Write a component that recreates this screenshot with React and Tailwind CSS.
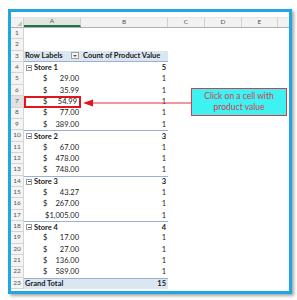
import React from "react";

const rows = [
  { n: 1 },
  { n: 2 },
  { n: 3, type: "head" },
  { n: 4, type: "store", label: "Store 1", count: 5 },
  { n: 5, v: "29.00" },
  { n: 6, v: "35.99" },
  { n: 7, v: "54.99", sel: true },
  { n: 8, v: "77.00" },
  { n: 9, v: "389.00" },
  { n: 10, type: "store", label: "Store 2", count: 3 },
  { n: 11, v: "67.00" },
  { n: 12, v: "478.00" },
  { n: 13, v: "748.00" },
  { n: 14, type: "store", label: "Store 3", count: 3 },
  { n: 15, v: "43.27" },
  { n: 16, v: "267.00" },
  { n: 17, v: "1,005.00", wide: true },
  { n: 18, type: "store", label: "Store 4", count: 4 },
  { n: 19, v: "17.00" },
  { n: 20, v: "27.00" },
  { n: 21, v: "136.00" },
  { n: 22, v: "589.00" },
  { n: 23, type: "total", count: 15 },
];

function Collapse() {
  return (
    <span className="mr-[2px] flex h-[6px] w-[6px] items-center justify-center border border-[#9a9a9a] bg-white">
      <span className="h-px w-[3px] bg-[#555]" />
    </span>
  );
}

function Row({ r }) {
  const blue = r.type === "head" || r.type === "total";
  const lineTop = r.type === "store" && r.n !== 4;
  return (
    <div className="flex h-[11.36px]">
      <div
        className={`flex w-[13px] shrink-0 items-center justify-center border-r border-b border-[#d4d4d4] text-[6.5px] text-[#555] ${
          r.sel ? "bg-[#e1e1e1]" : "bg-[#f4f4f4]"
        }`}
      >
        {r.n}
      </div>
      <div
        className={`flex w-[144px] shrink-0 ${blue ? "bg-[#dce6f1]" : ""} ${
          r.type === "head" ? "border-b border-[#95b3d7]" : ""
        } ${lineTop || r.type === "total" ? "border-t border-[#95b3d7]" : ""}`}
      >
        <div
          className={`flex w-[57px] shrink-0 items-center ${
            r.sel ? "border-2 border-[#e0161c]" : ""
          }`}
        >
          {r.type === "head" && (
            <div className="flex w-full items-center justify-between pl-[1px] pr-[2px] font-bold">
              <span>Row Labels</span>
              <span className="flex h-[7px] w-[8px] items-center justify-center border border-[#a0a0a0] bg-[#f4f4f4]">
                <span className="h-0 w-0 border-x-[2px] border-t-[2.5px] border-x-transparent border-t-[#555]" />
              </span>
            </div>
          )}
          {r.type === "store" && (
            <div className="flex items-center pl-[2px] font-bold">
              <Collapse />
              {r.label}
            </div>
          )}
          {r.type === "total" && (
            <div className="pl-[1px] font-bold">Grand Total</div>
          )}
          {r.v && r.wide && (
            <div className="flex w-full justify-end pr-[2px]">
              <span>${r.v}</span>
            </div>
          )}
          {r.v && !r.wide && (
            <div
              className={`flex w-full justify-between pr-[2px] ${
                r.sel ? "pl-[17px]" : "pl-[19px]"
              }`}
            >
              <span>$</span>
              <span>{r.v}</span>
            </div>
          )}
        </div>
        <div className="flex w-[87px] shrink-0 items-center justify-end pr-[2px]">
          {r.type === "head" && (
            <span className="w-full pl-[2px] font-bold">
              Count of Product Value
            </span>
          )}
          {(r.type === "store" || r.type === "total") && (
            <span className="font-bold">{r.count}</span>
          )}
          {r.v && <span>1</span>}
        </div>
      </div>
    </div>
  );
}

export default function App() {
  return (
    <div
      className="h-[300px] w-[297px] bg-white pl-[8px] pt-[9px] text-[7.5px] leading-none text-[#1a1a1a]"
      style={{ fontFamily: "Lato, 'Liberation Sans', sans-serif" }}
    >
      <div className="relative h-[285px] w-[284px] border-[3px] border-[#22a6e3] bg-white shadow-[2px_2px_3px_rgba(0,0,0,0.35)]">
        <div className="h-full w-full overflow-hidden">
          <div className="h-[6px] border-b border-[#e6e6e6]" />
          {/* column headers */}
          <div className="flex h-[10px] border-b border-[#b0b0b0] bg-[#f2f2f2] text-[6.5px] text-[#555]">
            <div className="flex w-[13px] shrink-0 items-end justify-end border-r border-[#d0d0d0] p-[1px]">
              <span className="h-0 w-0 border-b-[5px] border-l-[5px] border-b-[#c4c4c4] border-l-transparent" />
            </div>
            <div className="flex w-[57px] shrink-0 items-center justify-center border-r border-b-2 border-[#d0d0d0] border-b-[#217346] bg-[#e1e6e1]">
              A
            </div>
            <div className="flex w-[87px] shrink-0 items-center justify-center border-r border-[#d0d0d0]">
              B
            </div>
            <div className="flex w-[37px] shrink-0 items-center justify-center border-r border-[#d0d0d0]">
              C
            </div>
            <div className="flex w-[37px] shrink-0 items-center justify-center border-r border-[#d0d0d0]">
              D
            </div>
            <div className="flex w-[36px] shrink-0 items-center justify-center border-r border-[#d0d0d0]">
              E
            </div>
            <div className="flex-1" />
          </div>
          {rows.map((r) => (
            <Row key={r.n} r={r} />
          ))}
        </div>

        {/* arrow */}
        <svg
          className="absolute left-[70px] top-[85px]"
          width="112"
          height="12"
          viewBox="0 0 112 12"
        >
          <line x1="9" y1="6" x2="112" y2="6" stroke="#e0303a" strokeWidth="1" />
          <polygon points="2,6 12,2.5 12,9.5" fill="#e0161c" />
        </svg>

        {/* callout */}
        <div className="absolute left-[180px] top-[76px] flex h-[28px] w-[96px] flex-col items-center justify-center border border-[#d0404c] bg-[#3ef2f2] text-[8.5px] leading-[11px] text-[#d03a4e]">
          <span>Click on a cell with</span>
          <span>product value</span>
        </div>
      </div>
    </div>
  );
}
